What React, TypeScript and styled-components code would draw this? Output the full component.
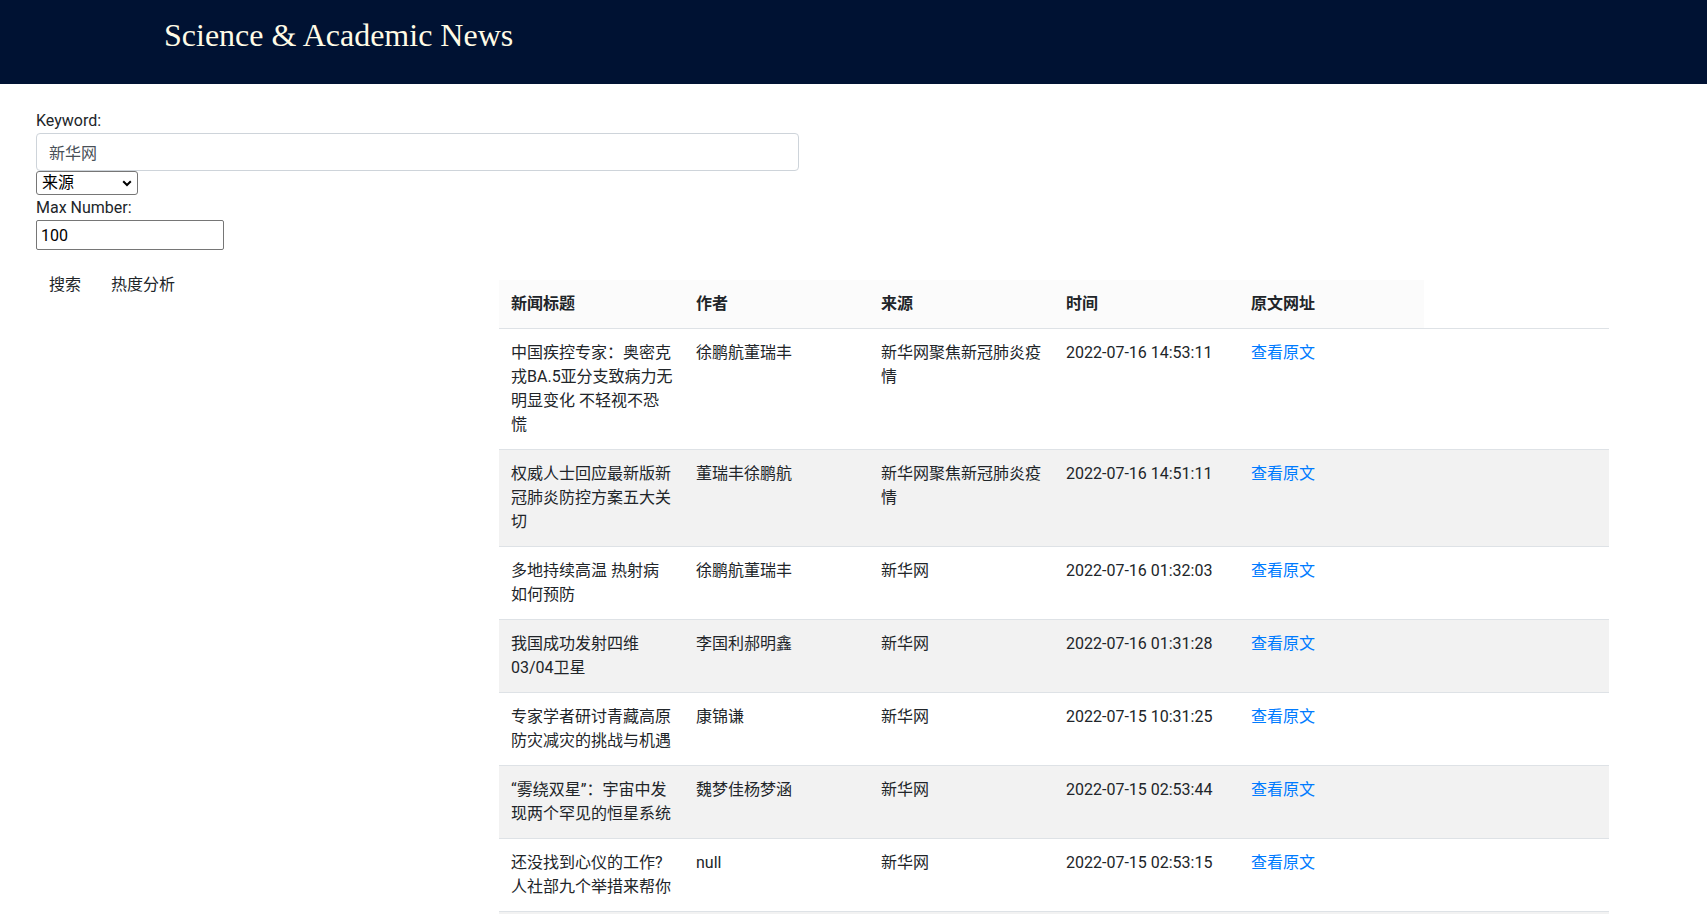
import React from "react";
import styled, { createGlobalStyle } from "styled-components";

const GlobalStyle = createGlobalStyle`
  html { scrollbar-width: none; }
  html::-webkit-scrollbar { display: none; }
  *, *::before, *::after { box-sizing: border-box; }
  body {
    margin: 0;
    background: #ffffff;
    color: #212529;
    font-family: Roboto, "Noto Sans CJK SC", sans-serif;
    font-size: 16px;
    line-height: 24px;
  }
`;

const Header = styled.header`
  height: 84px;
  background: #001233;
  padding: 17px 0 0 164px;
`;

const Title = styled.h1`
  margin: 0;
  font-family: "Liberation Serif", "Times New Roman", serif;
  font-weight: 400;
  font-size: 32px;
  line-height: normal;
  color: #fffbe6;
`;

const Main = styled.main`
  padding: 25px 0 0 36px;
`;

const SearchForm = styled.form`
  display: flex;
  flex-direction: column;
  align-items: flex-start;
`;

const Label = styled.label<{ $gap?: number }>`
  display: block;
  margin-top: ${(p) => p.$gap ?? 0}px;
  line-height: 24px;
  color: #212529;
`;

const KeywordInput = styled.input`
  width: 763px;
  height: 38px;
  padding: 6px 12px;
  border: 1px solid #ced4da;
  border-radius: 4px;
  font: inherit;
  color: #495057;
  background: #fff;
  outline: none;
`;

const SelectWrap = styled.div`
  position: relative;
  width: 102px;
  height: 24px;
`;

const FieldSelect = styled.select`
  appearance: none;
  width: 102px;
  height: 24px;
  padding: 0 0 0 5px;
  border: 1px solid #767676;
  border-radius: 3px;
  background: #fff;
  color: #000;
  font-family: Roboto, "Noto Sans CJK SC", sans-serif;
  font-size: 16px;
  line-height: 22px;
  outline: none;
`;

const Chevron = styled.svg`
  position: absolute;
  right: 6px;
  top: 9px;
  pointer-events: none;
`;

const NumberInput = styled.input`
  width: 188px;
  height: 30px;
  padding: 0 4px;
  border: 1px solid #767676;
  border-radius: 2px;
  font-family: Roboto, sans-serif;
  font-size: 16px;
  color: #000;
  background: #fff;
  outline: none;
`;

const ContentRow = styled.div`
  display: flex;
  align-items: flex-start;
  margin-top: 16px;
`;

const ButtonBar = styled.div`
  width: 463px;
  flex-shrink: 0;
  display: flex;
  gap: 4px;
`;

const PlainButton = styled.button`
  padding: 6px 12px;
  border: 1px solid transparent;
  border-radius: 4px;
  background: transparent;
  color: #212529;
  font-family: Roboto, "Noto Sans CJK SC", sans-serif;
  font-size: 16px;
  line-height: 24px;
  cursor: pointer;
`;

const NewsTable = styled.table`
  margin-top: 14px;
  width: 1110px;
  table-layout: fixed;
  border-collapse: collapse;
`;

const HeadCell = styled.th`
  padding: 12px;
  background: #fbfbfb;
  text-align: left;
  font-weight: 700;
  vertical-align: bottom;
`;

const Row = styled.tr`
  &:nth-of-type(even) {
    background: #f2f2f2;
  }
`;

const Cell = styled.td`
  padding: 12px 10px 12px 12px;
  border-top: 1px solid #dee2e6;
  vertical-align: top;
  color: #212529;
  word-break: break-word;
`;

const SourceLink = styled.a`
  color: #007bff;
  text-decoration: none;
`;

type News = { title: string; author: string; source: string; time: string };

const news: News[] = [
  { title: "中国疾控专家：奥密克戎BA.5亚分支致病力无明显变化 不轻视不恐慌", author: "徐鹏航董瑞丰", source: "新华网聚焦新冠肺炎疫情", time: "2022-07-16 14:53:11" },
  { title: "权威人士回应最新版新冠肺炎防控方案五大关切", author: "董瑞丰徐鹏航", source: "新华网聚焦新冠肺炎疫情", time: "2022-07-16 14:51:11" },
  { title: "多地持续高温 热射病如何预防", author: "徐鹏航董瑞丰", source: "新华网", time: "2022-07-16 01:32:03" },
  { title: "我国成功发射四维03/04卫星", author: "李国利郝明鑫", source: "新华网", time: "2022-07-16 01:31:28" },
  { title: "专家学者研讨青藏高原防灾减灾的挑战与机遇", author: "康锦谦", source: "新华网", time: "2022-07-15 10:31:25" },
  { title: "“雾绕双星”：宇宙中发现两个罕见的恒星系统", author: "魏梦佳杨梦涵", source: "新华网", time: "2022-07-15 02:53:44" },
  { title: "还没找到心仪的工作?人社部九个举措来帮你", author: "null", source: "新华网", time: "2022-07-15 02:53:15" },
  { title: "我国科学家发现新型量子材料", author: "董瑞丰", source: "新华网", time: "2022-07-14 18:20:05" },
  { title: "夏季高温如何科学防暑", author: "徐鹏航", source: "新华网", time: "2022-07-14 10:12:47" },
];

const headers = ["新闻标题", "作者", "来源", "时间", "原文网址"];

export default function App() {
  return (
    <>
      <GlobalStyle />
      <Header>
        <Title>Science &amp; Academic News</Title>
      </Header>
      <Main>
        <SearchForm onSubmit={(e) => e.preventDefault()}>
          <Label htmlFor="kw">Keyword:</Label>
          <KeywordInput id="kw" defaultValue="新华网" />
          <SelectWrap>
            <FieldSelect defaultValue="source">
              <option value="source">来源</option>
              <option value="title">标题</option>
              <option value="author">作者</option>
            </FieldSelect>
            <Chevron width="10" height="7" viewBox="0 0 10 7">
              <path d="M1.2 1.2 L5 5 L8.8 1.2" fill="none" stroke="#000" strokeWidth="2" />
            </Chevron>
          </SelectWrap>
          <Label htmlFor="max" $gap={1}>Max Number:</Label>
          <NumberInput id="max" defaultValue="100" />
        </SearchForm>
        <ContentRow>
          <ButtonBar>
            <PlainButton type="button">搜索</PlainButton>
            <PlainButton type="button">热度分析</PlainButton>
          </ButtonBar>
          <NewsTable>
            <colgroup>
              {[0, 1, 2, 3, 4, 5].map((i) => (
                <col key={i} style={{ width: 185 }} />
              ))}
            </colgroup>
            <thead>
              <tr>
                {headers.map((h) => (
                  <HeadCell key={h}>{h}</HeadCell>
                ))}
              </tr>
            </thead>
            <tbody>
              {news.map((n, i) => (
                <Row key={i}>
                  <Cell>{n.title}</Cell>
                  <Cell>{n.author}</Cell>
                  <Cell>{n.source}</Cell>
                  <Cell>{n.time}</Cell>
                  <Cell>
                    <SourceLink href="#">查看原文</SourceLink>
                  </Cell>
                  <Cell />
                </Row>
              ))}
            </tbody>
          </NewsTable>
        </ContentRow>
      </Main>
    </>
  );
}
